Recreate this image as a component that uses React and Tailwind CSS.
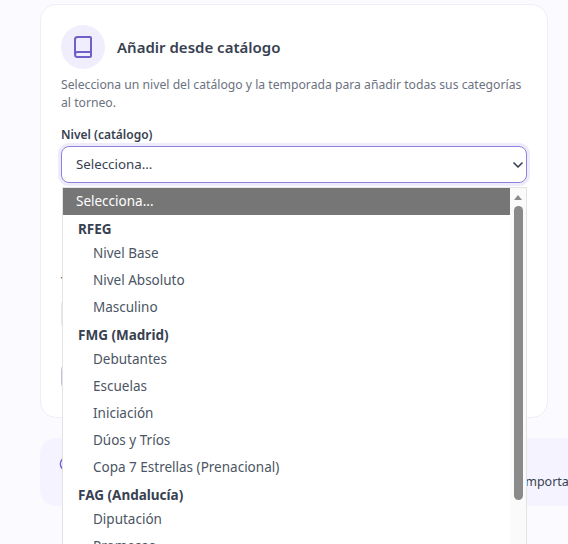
import React from 'react';
import { ChevronDown, Info } from 'lucide-react';

const groups = [
  { label: 'RFEG', items: ['Nivel Base', 'Nivel Absoluto', 'Masculino'] },
  { label: 'FMG (Madrid)', items: ['Debutantes', 'Escuelas', 'Iniciación', 'Dúos y Tríos', 'Copa 7 Estrellas (Prenacional)'] },
  { label: 'FAG (Andalucía)', items: ['Diputación', 'Promesas'] },
];

const BookIcon = () => (
  <svg width="24" height="24" viewBox="0 0 24 24" fill="none" stroke="#6f5fc9" strokeWidth="2" strokeLinecap="round" strokeLinejoin="round">
    <path d="M4 19.5v-15A2.5 2.5 0 0 1 6.5 2H19a1 1 0 0 1 1 1v18a1 1 0 0 1-1 1H6.5a1 1 0 0 1 0-5H20" />
  </svg>
);

const App = () => {
  return (
    <div className="relative h-[544px] w-[568px] overflow-hidden bg-[#fbfaff] font-['Noto_Sans',sans-serif]">
      <div className="ml-10 mt-1 h-[414px] w-[508px] rounded-2xl border border-[#efedf8] bg-white px-5 pt-5">
        <div className="flex items-center gap-3">
          <div className="flex h-11 w-11 items-center justify-center rounded-full bg-[#f0eefc]">
            <BookIcon />
          </div>
          <h2 className="text-[15px] font-semibold text-[#374151]">Añadir desde catálogo</h2>
        </div>
        <p className="mt-[7px] whitespace-nowrap text-[12.2px] leading-[17.5px] text-[#6b7280]">
          Selecciona un nivel del catálogo y la temporada para añadir todas sus categorías
          <br />
          al torneo.
        </p>
        <label className="mt-[15px] block text-[12px] leading-[17px] font-semibold text-[#374151]">Nivel (catálogo)</label>
        <div className="mt-[3px] flex h-[37px] w-[466px] items-center justify-between rounded-lg border border-[#8f82dc] bg-white pl-[14px] text-[13.3px] text-[#374151] shadow-[0_0_0_3px_#eeebfb]">
          <span>Selecciona...</span>
          <ChevronDown size={16} strokeWidth={2.5} className="text-[#374151]" />
        </div>

        {/* rest of the form, almost all of it under the open list */}
        <label className="mt-[90px] block text-[12px] leading-[17px] font-semibold text-[#374151]">Temporada</label>
        <div className="mt-[7px] h-[34px] w-[466px] rounded-lg border border-[#e5e7eb]" />
        <div className="mt-[31px] h-[29px] w-[160px] rounded-lg border border-[#c5bfe8]" />
      </div>

      <div className="ml-10 mt-5 flex h-[68px] w-[528px] items-start rounded-l-2xl bg-[#f5f3ff] pl-[19px] text-[12.5px] leading-[18px] text-[#374151]">
        <Info size={16} strokeWidth={2} className="mt-[18px] shrink-0 text-[#6f5fc9]" />
        <span className="ml-auto mr-[-6px] mt-[35px]">importar</span>
      </div>

      {/* native select popup, over the page */}
      <div className="absolute left-[62px] top-[187px] flex h-[360px] w-[465px] border border-[#e3e3e3] bg-white text-[13.5px] text-[#4b5563]">
        <div className="flex-1">
          <div className="flex h-[27px] items-center bg-[#767676] pl-[13px] text-white">Selecciona...</div>
          {groups.map((g) => (
            <div key={g.label}>
              <div className="mt-1 flex h-[21px] items-center pl-[15px] font-bold text-[#374151]">{g.label}</div>
              {g.items.map((item) => (
                <div key={item} className="flex h-[27px] items-center pl-[30px]">{item}</div>
              ))}
            </div>
          ))}
        </div>
        <div className="flex w-[16px] flex-col items-center bg-[#fafafa]">
          <div className="mt-[7px] h-0 w-0 border-x-[4px] border-b-[5px] border-x-transparent border-b-[#8a8a8a]" />
          <div className="mt-[6px] h-[294px] w-[9px] rounded-full bg-[#8a8a8a]" />
        </div>
      </div>
    </div>
  );
};

export default App;
